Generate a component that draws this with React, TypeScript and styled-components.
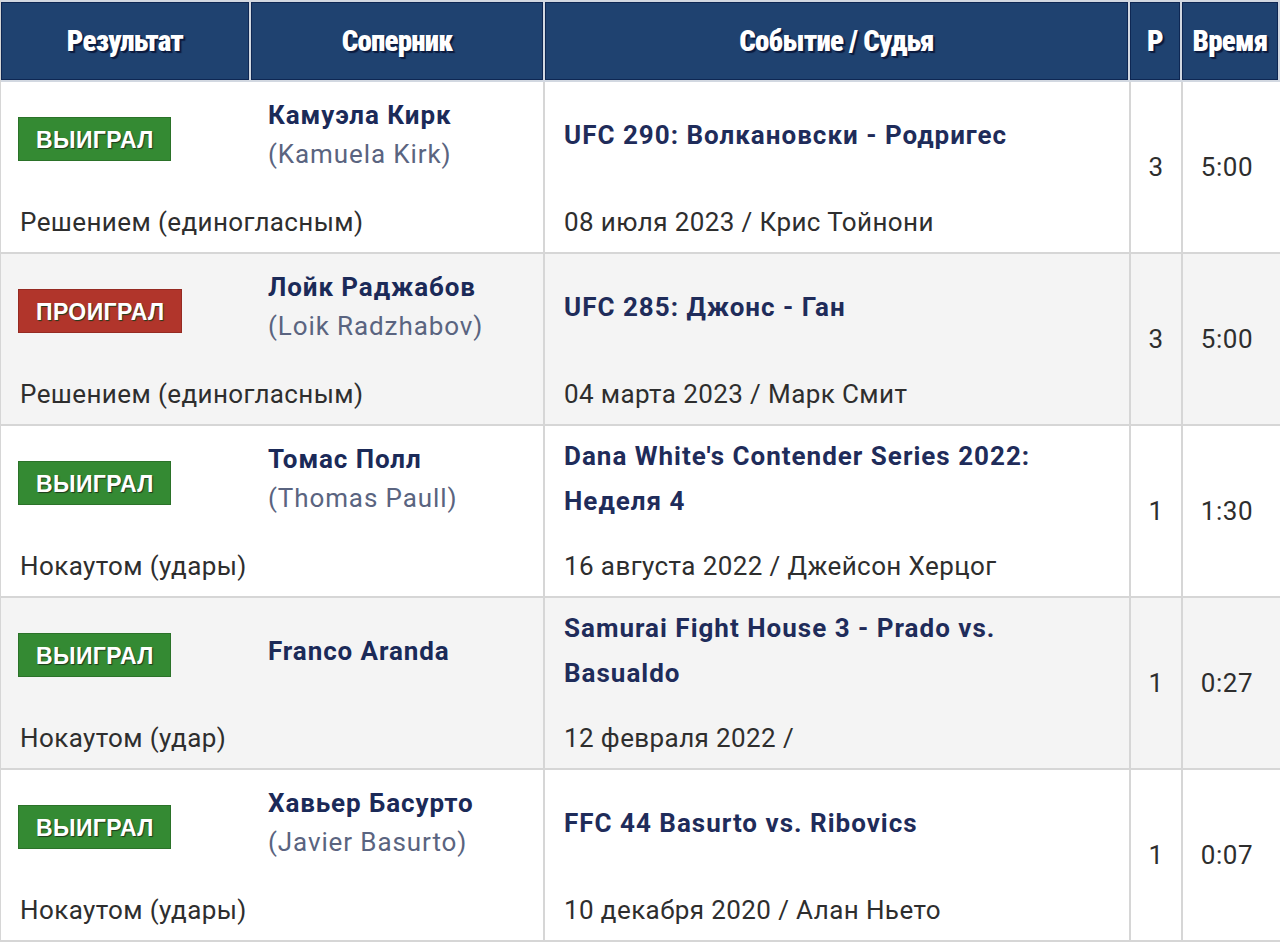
import React from "react";
import styled, { createGlobalStyle } from "styled-components";

const Global = createGlobalStyle`
  html, body { margin: 0; padding: 0; background: #ffffff; }
  body { font-family: Roboto, "Noto Sans", Arial, sans-serif; }
`;

const Table = styled.div`
  width: 1280px;
  border-left: 1px solid #d6d6d6;
  box-sizing: border-box;
`;

const Header = styled.div`
  display: grid;
  grid-template-columns: 248px 292px 583px 50px 96px;
  column-gap: 2px;
  padding: 2px 2px 2px 0;
  background: #d2d8e1;
`;

const HeadCell = styled.div`
  height: 78px;
  background: #1f4270;
  box-shadow: inset 0 0 0 1px #0e2753;
  display: flex;
  align-items: center;
  justify-content: center;
  color: #ffffff;
  font-family: "Roboto Condensed", Roboto, sans-serif;
  font-weight: 900;
  font-size: 29px;
  letter-spacing: -0.8px;
  text-shadow: 1px 1px 0 #0b1a3e, 2px 2px 1px #0b1a3e;
`;

const Row = styled.div<{ $alt: boolean }>`
  display: grid;
  grid-template-columns: 542px 586px 52px 1fr;
  height: 170px;
  border-bottom: 2px solid #d6d6d6;
  background: ${(p) => (p.$alt ? "#f4f4f4" : "#ffffff")};
`;

const FighterCell = styled.div`
  display: grid;
  grid-template-columns: 249px 1fr;
  grid-template-rows: 90px 1fr;
  padding: 8px 0 0 0;
  box-sizing: border-box;
`;

const BadgeBox = styled.div`
  display: flex;
  align-items: center;
  padding: 7px 0 0 17px;
`;

const Badge = styled.span<{ $win: boolean }>`
  display: inline-block;
  height: 44px;
  line-height: 44px;
  padding: 0 16px 0 17px;
  box-sizing: border-box;
  background: ${(p) => (p.$win ? "#348a33" : "#b1352b")};
  border: 1px solid ${(p) => (p.$win ? "#2b7229" : "#952a22")};
  color: #ffffff;
  font-family: "Liberation Sans", Arial, sans-serif;
  font-weight: 700;
  font-size: 23px;
  letter-spacing: 0.4px;
  text-shadow: 1px 1px 1px #1e3a1c;
`;

const NameBox = styled.div`
  display: flex;
  flex-direction: column;
  justify-content: center;
  padding-left: 18px;
`;

const Name = styled.div`
  font-family: Roboto, sans-serif;
  font-weight: 700;
  font-size: 26px;
  letter-spacing: 0.9px;
  line-height: 39px;
  color: #1b2a58;
`;

const OrigName = styled.div`
  font-family: Roboto, sans-serif;
  font-size: 26px;
  letter-spacing: 0.9px;
  line-height: 39px;
  color: #5a6480;
`;

const Method = styled.div`
  grid-column: 1 / span 2;
  padding: 21px 0 0 19px;
  font-family: Roboto, sans-serif;
  font-size: 26px;
  letter-spacing: 0.4px;
  line-height: 42px;
  color: #2e2e2e;
`;

const EventCell = styled.div`
  display: grid;
  grid-template-rows: 90px 1fr;
  padding: 8px 0 0 19px;
  border-left: 2px solid #d6d6d6;
  box-sizing: border-box;
`;

const EventTitle = styled.div`
  display: flex;
  align-items: center;
  font-family: Roboto, sans-serif;
  font-weight: 700;
  font-size: 26px;
  letter-spacing: 1px;
  line-height: 45px;
  color: #1f2c5a;
  padding-right: 60px;
`;

const EventDate = styled.div`
  padding-top: 21px;
  font-family: Roboto, sans-serif;
  font-size: 26px;
  letter-spacing: 0.4px;
  line-height: 42px;
  color: #2e2e2e;
`;

const NumCell = styled.div<{ $padRight?: number }>`
  display: flex;
  align-items: center;
  justify-content: center;
  padding-right: ${(p) => p.$padRight ?? 0}px;
  border-left: 2px solid #d6d6d6;
  font-family: Roboto, sans-serif;
  font-size: 26px;
  letter-spacing: 0.6px;
  color: #2e2e2e;
`;

type Fight = {
  win: boolean;
  name: string;
  orig?: string;
  method: string;
  event: string;
  date: string;
  round: string;
  time: string;
};

const fights: Fight[] = [
  {
    win: true,
    name: "Камуэла Кирк",
    orig: "(Kamuela Kirk)",
    method: "Решением (единогласным)",
    event: "UFC 290: Волкановски - Родригес",
    date: "08 июля 2023 / Крис Тойнони",
    round: "3",
    time: "5:00",
  },
  {
    win: false,
    name: "Лойк Раджабов",
    orig: "(Loik Radzhabov)",
    method: "Решением (единогласным)",
    event: "UFC 285: Джонс - Ган",
    date: "04 марта 2023 / Марк Смит",
    round: "3",
    time: "5:00",
  },
  {
    win: true,
    name: "Томас Полл",
    orig: "(Thomas Paull)",
    method: "Нокаутом (удары)",
    event: "Dana White's Contender Series 2022: Неделя 4",
    date: "16 августа 2022 / Джейсон Херцог",
    round: "1",
    time: "1:30",
  },
  {
    win: true,
    name: "Franco Aranda",
    method: "Нокаутом (удар)",
    event: "Samurai Fight House 3 - Prado vs. Basualdo",
    date: "12 февраля 2022 /",
    round: "1",
    time: "0:27",
  },
  {
    win: true,
    name: "Хавьер Басурто",
    orig: "(Javier Basurto)",
    method: "Нокаутом (удары)",
    event: "FFC 44 Basurto vs. Ribovics",
    date: "10 декабря 2020 / Алан Ньето",
    round: "1",
    time: "0:07",
  },
];

export default function App() {
  return (
    <>
      <Global />
      <Table>
        <Header>
          <HeadCell>Результат</HeadCell>
          <HeadCell>Соперник</HeadCell>
          <HeadCell>Событие / Судья</HeadCell>
          <HeadCell>Р</HeadCell>
          <HeadCell>Время</HeadCell>
        </Header>
        {fights.map((f, i) => (
          <Row key={i} $alt={i % 2 === 1}>
            <FighterCell>
              <BadgeBox>
                <Badge $win={f.win}>{f.win ? "ВЫИГРАЛ" : "ПРОИГРАЛ"}</Badge>
              </BadgeBox>
              <NameBox>
                <Name>{f.name}</Name>
                {f.orig && <OrigName>{f.orig}</OrigName>}
              </NameBox>
              <Method>{f.method}</Method>
            </FighterCell>
            <EventCell>
              <EventTitle>{f.event}</EventTitle>
              <EventDate>{f.date}</EventDate>
            </EventCell>
            <NumCell>{f.round}</NumCell>
            <NumCell $padRight={9}>{f.time}</NumCell>
          </Row>
        ))}
      </Table>
    </>
  );
}
